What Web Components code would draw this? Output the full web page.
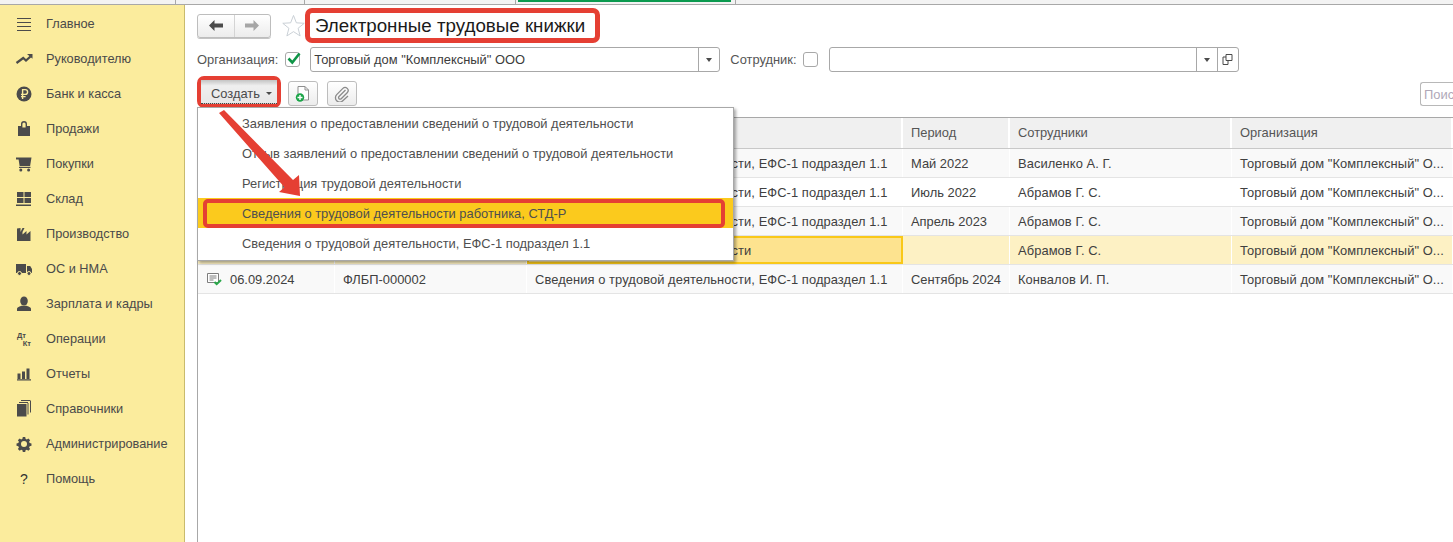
<!DOCTYPE html>
<html lang="ru">
<head>
<meta charset="utf-8">
<title>Электронные трудовые книжки</title>
<style>
  html, body { margin: 0; height: 100%; }
  body { font: 12.9px "Liberation Sans", Arial, sans-serif; color: #4b4b4b; background: #fff; overflow: hidden; }
</style>
</head>
<body>
<app-shell>
  <side-panel slot="side">
    <side-item icon="menu">Главное</side-item>
    <side-item icon="trend">Руководителю</side-item>
    <side-item icon="ruble">Банк и касса</side-item>
    <side-item icon="bag">Продажи</side-item>
    <side-item icon="cart">Покупки</side-item>
    <side-item icon="store">Склад</side-item>
    <side-item icon="factory">Производство</side-item>
    <side-item icon="truck">ОС и НМА</side-item>
    <side-item icon="person">Зарплата и кадры</side-item>
    <side-item icon="dtkt">Операции</side-item>
    <side-item icon="bars">Отчеты</side-item>
    <side-item icon="books">Справочники</side-item>
    <side-item icon="gear">Администрирование</side-item>
    <side-item icon="help">Помощь</side-item>
  </side-panel>
  <doc-header>Электронные трудовые книжки</doc-header>
  <filter-row></filter-row>
  <command-bar></command-bar>
  <doc-table></doc-table>
  <create-menu></create-menu>
</app-shell>

<script>
// sidebar icons, drawn on a 20x20 box
const ICONS = {
  menu: `<path d="M3 4.500h14M3 8.500h14M3 12.500h14M3 16.500h14" stroke="#4b4b4b" stroke-width="1" fill="none"/>`,
  trend: `<path d="M2.500 14 9.200 9l2.800 2.500 4.500-4" stroke="#4b4b4b" stroke-width="2.200" fill="none"/><path d="M13 5h5.500v4.800z" fill="#4b4b4b"/>`,
  ruble: `<circle cx="10" cy="10" r="7.500" fill="#4b4b4b"/><path d="M8.600 15V5.600h2.600a2.300 2.300 0 0 1 0 4.800H7M7 12.600h4.600" stroke="#fbec9d" stroke-width="1.400" fill="none"/>`,
  bag: `<path d="M4 7h3V5a3 3 0 0 1 6 0v2h3v10H4z" fill="#4b4b4b"/><path d="M8.400 8.500V5a1.600 1.600 0 0 1 3.200 0v3.500z" fill="#fbec9d"/>`,
  cart: `<path d="M2 3.500h15.500l-1.400 8.500H5.600L4.600 5.500H2z" fill="#4b4b4b"/><rect x="5" y="12.800" width="11.500" height="1.200" fill="#4b4b4b"/><circle cx="6.800" cy="16" r="1.500" fill="#4b4b4b"/><circle cx="14.600" cy="16" r="1.500" fill="#4b4b4b"/>`,
  store: `<path d="M3 3h6.500v5H3zM10.500 3H17v5h-6.500zM3 9h6.500v5H3zM10.500 9H17v5h-6.500zM2 15.500h15v1.500H2z" fill="#4b4b4b"/>`,
  factory: `<path d="M3 17V4.500l3.500-.5v4l2-4h2l-2 4v2.500l4-3.500v3.500l4-3.500V17z" fill="#4b4b4b"/>`,
  truck: `<path d="M2 5h10v9H2zM13 7h3.200L18 10v4h-5z" fill="#4b4b4b"/><circle cx="5.500" cy="14.500" r="2" fill="#4b4b4b" stroke="#fbec9d"/><circle cx="15" cy="14.500" r="2" fill="#4b4b4b" stroke="#fbec9d"/>`,
  person: `<ellipse cx="10" cy="7" rx="3.800" ry="4.600" fill="#4b4b4b"/><path d="M3 17v-2c0-1.600 3-2.800 4.600-3.200h4.800c1.600.4 4.600 1.600 4.600 3.200v2z" fill="#4b4b4b"/>`,
  bars: `<path d="M3.500 9.500h3v5.500h-3zM8 7.500h3V15H8zM12.500 4.500h3V15h-3zM3 15.200h14v1.200H3z" fill="#4b4b4b"/>`,
  books: `<path d="M3 5h9.500v12.500H3z" fill="#4b4b4b"/><path d="M14 4v11.500M16.500 2v11.500M5 3.500h9M7 1.500h9.500" stroke="#4b4b4b" fill="none"/>`,
  gear: `<path d="M8.600 2.500h2.800l.4 2.100 1.500.7 1.800-1.100 2 2-1.200 1.800.7 1.500 2.100.4v2.800l-2.100.4-.7 1.500 1.200 1.800-2 2-1.800-1.200-1.500.7-.4 2.100H8.600l-.4-2.100-1.500-.7-1.800 1.200-2-2 1.200-1.800-.7-1.500-2.100-.4V9.900l2.100-.4.7-1.500L2.900 6.200l2-2 1.800 1.100 1.500-.7z" transform="translate(1.400 .900) scale(.86)" fill="#4b4b4b"/><circle cx="10" cy="10" r="3" fill="#fbec9d"/>`
};

class AppShell extends HTMLElement {
  constructor() {
    super();
    this.attachShadow({ mode: "open" });
    this.shadowRoot.innerHTML = `
      <style>
        :host { display: block; position: relative; height: 542px; overflow: hidden; }
        .tabs { display: flex; height: 4px; background: #f3f3f3; border-bottom: 1px solid #a8a8a8; }
        .tabs i { display: block; box-sizing: border-box; height: 4px; border-right: 1px solid #a8a8a8; }
        .tabs .a { width: 176px; }
        .tabs .b { width: 129px; }
        .tabs .c { width: 211px; }
        .tabs .d { width: 220px; position: relative; }
        .tabs .d::before { content: ""; position: absolute; left: 2px; width: 213px; top: 0; height: 2px; background: #0b9a4f; }
        .body { display: flex; height: 537px; }
        main { flex: 1; min-width: 0; padding-left: 12px; display: flex; flex-direction: column; }
      </style>
      <div class="tabs"><i class="a"></i><i class="b"></i><i class="c"></i><i class="d"></i></div>
      <div class="body">
        <slot name="side"></slot>
        <main><slot></slot></main>
      </div>
    `;
  }
}

class SidePanel extends HTMLElement {
  constructor() {
    super();
    this.attachShadow({ mode: "open" });
    this.shadowRoot.innerHTML = `
      <style>
        :host { display: block; box-sizing: border-box; width: 185px; flex: none; padding-top: 1px; background: #fbec9d; border-right: 1px solid #c9bb6d; }
      </style>
      <slot></slot>
    `;
  }
}

class SideItem extends HTMLElement {
  constructor() {
    super();
    this.attachShadow({ mode: "open" });
  }

  connectedCallback() {
    const name = this.getAttribute("icon");
    let icon = `<svg width="20" height="20" viewBox="0 0 20 20">${ICONS[name] || ""}</svg>`;
    if (name === "dtkt") icon = `<span class="dk"><b>Дт</b><b>Кт</b></span>`;
    if (name === "help") icon = `<span class="q">?</span>`;
    this.shadowRoot.innerHTML = `
      <style>
        :host { display: flex; align-items: center; height: 35px; color: #4a4a4a; font-size: 12.75px; }
        .i { width: 20px; height: 20px; margin: 0 12px 0 14px; flex: none; display: flex; justify-content: center; align-items: center; }
        .q { font-size: 14px; color: #333; }
        .dk { display: flex; flex-direction: column; width: 14px; font-size: 7.500px; line-height: 8px; margin-top: 2px; }
        .dk b:last-child { align-self: flex-end; }
      </style>
      <span class="i">${icon}</span><slot></slot>
    `;
  }
}

class DocHeader extends HTMLElement {
  constructor() {
    super();
    this.attachShadow({ mode: "open" });
    this.shadowRoot.innerHTML = `
      <style>
        :host { display: flex; align-items: center; height: 35px; margin-top: 3px; flex: none; }
        .nav { display: flex; box-sizing: border-box; width: 74px; height: 24px; border: 1px solid #bdbdbd; border-radius: 3px; background: linear-gradient(#fff, #ececec); box-shadow: 0 1px 0 #c4c4c4; }
        .nav span { flex: 1; display: flex; align-items: center; justify-content: center; }
        .nav span + span { border-left: 1px solid #d4d4d4; }
        .star { margin-left: 11px; flex: none; }
        h1 { margin: 0; box-sizing: border-box; height: 35px; padding: 0 10px 0 5px; display: flex; align-items: center; font: 18.750px "Liberation Sans", Arial, sans-serif; color: #1a1a1a; border: 5px solid #e53f33; border-radius: 7px; white-space: nowrap; }
      </style>
      <div class="nav">
        <span><svg width="14" height="11" viewBox="0 0 14 11"><path d="M0 5.500 5.500 0v3.500H14v4H5.500V11z" fill="#4b4b4b"/></svg></span>
        <span><svg width="14" height="11" viewBox="0 0 14 11"><path d="M14 5.500 8.500 0v3.500H0v4h8.500V11z" fill="#a6a6a6"/></svg></span>
      </div>
      <svg class="star" width="23" height="23" viewBox="0 0 24 24"><path d="M12 1.500l3 7.700 8.200.5-6.400 5.200 2.100 8L12 18.400l-6.900 4.500 2.100-8L.8 9.700 9 9.200z" fill="#fff" stroke="#c8ced4"/></svg>
      <h1><slot></slot></h1>
    `;
  }
}

class FilterRow extends HTMLElement {
  constructor() {
    super();
    this.attachShadow({ mode: "open" });
    this.shadowRoot.innerHTML = `
      <style>
        :host { display: flex; align-items: center; height: 25px; margin-top: 4px; color: #555; flex: none; }
        .check { box-sizing: border-box; width: 15px; height: 15px; border: 1px solid #a8a8a8; border-radius: 3px; position: relative; flex: none; }
        .check svg { position: absolute; left: 0; top: -2px; }
        .c1 { margin: 0 10px 0 7px; }
        .c2 { margin: 0 11px 0 6px; }
        .field { box-sizing: border-box; height: 25px; border: 1px solid #a8a8a8; border-radius: 3px; display: flex; align-items: center; color: #3c3c3c; background: #fff; flex: none; }
        .text { flex: 1; padding-left: 3px; white-space: nowrap; }
        .btn { box-sizing: border-box; width: 21px; height: 23px; border-left: 1px solid #a8a8a8; display: flex; align-items: center; justify-content: center; }
        .arrow { width: 0; height: 0; border: 3px solid transparent; border-top: 4px solid #4b4b4b; border-bottom: 0; }
        .org { width: 410px; }
        .emp { width: 410px; }
        .emp-label { margin-left: 10px; }
      </style>
      <span>Организация:</span>
      <span class="check c1"><svg width="16" height="16" viewBox="0 0 16 16"><path d="M2.500 7.500l3.800 4L13.500 2.500" fill="none" stroke="#0f9547" stroke-width="2.600"/></svg></span>
      <div class="field org"><span class="text">Торговый дом "Комплексный" ООО</span><span class="btn"><i class="arrow"></i></span></div>
      <span class="emp-label">Сотрудник:</span>
      <span class="check c2"></span>
      <div class="field emp">
        <span class="text"></span>
        <span class="btn"><i class="arrow"></i></span>
        <span class="btn"><svg width="11" height="11" viewBox="0 0 11 11"><path d="M4 .5h6v6H4zM4 3H1v7.500h5V7" fill="none" stroke="#4b4b4b"/></svg></span>
      </div>
    `;
  }
}

class CommandBar extends HTMLElement {
  constructor() {
    super();
    this.attachShadow({ mode: "open" });
    this.shadowRoot.innerHTML = `
      <style>
        :host { display: flex; align-items: center; height: 32px; margin-top: 4px; flex: none; }
        .create { box-sizing: border-box; width: 84px; height: 32px; border: 4px solid #e53f33; border-radius: 7px; margin-right: 7px; flex: none; }
        .inner { box-sizing: border-box; height: 100%; padding: 3px 0 0 10px; border-bottom: 1px dotted #444; background: linear-gradient(#c4c4c4, #efefef 25%, #e8e8e8); display: flex; align-items: center; gap: 6px; color: #4a4a4a; }
        .arrow { width: 0; height: 0; border: 3px solid transparent; border-top: 3px solid #4b4b4b; border-bottom: 0; }
        .ico { box-sizing: border-box; width: 30px; height: 25px; margin: 3px 9px 0 0; border: 1px solid #bdbdbd; border-radius: 3px; background: linear-gradient(#fff, #ececec); display: flex; align-items: center; justify-content: center; flex: none; }
        .search { box-sizing: border-box; width: 33px; height: 24px; margin: 4px 0 0 auto; border: 1px solid #b8b8b8; border-right: 0; border-radius: 3px 0 0 3px; padding-left: 3px; display: flex; align-items: center; color: #b0a8b8; overflow: hidden; }
      </style>
      <div class="create"><div class="inner"><span>Создать</span><i class="arrow"></i></div></div>
      <div class="ico"><svg width="18" height="18" viewBox="0 0 18 18"><path d="M4 1.500h7l3.500 3.500v10H4z" fill="#fff" stroke="#8f8f8f"/><path d="M11 1.500V5h3.500" fill="none" stroke="#8f8f8f"/><circle cx="6" cy="12.500" r="4.200" fill="#1ba548"/><path d="M6 10v5M3.500 12.500h5" stroke="#fff" stroke-width="1.400"/></svg></div>
      <div class="ico"><svg width="16" height="16" viewBox="0 0 16 16"><path d="M11.500 4 5 10.500a1.500 1.500 0 0 0 2.200 2.200l6-6a3 3 0 0 0-4.300-4.300l-6.200 6.200a4.300 4.300 0 0 0 6.100 6.100L14 10" fill="none" stroke="#8a8a8a" stroke-width="1.300"/></svg></div>
      <div class="search">Поис</div>
    `;
  }
}

const ROWS = [
  ["", "", "Сведения о трудовой деятельности, ЕФС-1 подраздел 1.1", "Май 2022", "Василенко А. Г."],
  ["", "", "Сведения о трудовой деятельности, ЕФС-1 подраздел 1.1", "Июль 2022", "Абрамов Г. С."],
  ["", "", "Сведения о трудовой деятельности, ЕФС-1 подраздел 1.1", "Апрель 2023", "Абрамов Г. С."],
  ["", "", "Сведения о трудовой деятельности", "", "Абрамов Г. С."],
  ["06.09.2024", "ФЛБП-000002", "Сведения о трудовой деятельности, ЕФС-1 подраздел 1.1", "Сентябрь 2024", "Конвалов И. П."]
];

class DocTable extends HTMLElement {
  constructor() {
    super();
    this.attachShadow({ mode: "open" });
    const rows = ROWS.map((r, i) => `
      <div class="row ${i === 3 ? "sel" : ""}">
        <span class="c date">${i === 4 ? `<svg width="16" height="14" viewBox="0 0 16 14"><path d="M1.500 1.500h11v9h-11z" fill="#fff" stroke="#7d7d7d"/><path d="M3.500 4h7M3.500 6h7M3.500 8h4" stroke="#7d7d7d"/><path d="M8.500 10l2.200 2.200L15 8" fill="none" stroke="#2aa84a" stroke-width="2"/></svg>` : ""}<span>${r[0]}</span></span>
        <span class="c">${r[1]}</span>
        <span class="c cur wide">${r[2]}</span>
        <span class="c">${r[3]}</span>
        <span class="c wide">${r[4]}</span>
        <span class="c wide">Торговый дом "Комплексный" О...</span>
      </div>`).join("");
    this.shadowRoot.innerHTML = `
      <style>
        :host { display: block; box-sizing: border-box; flex: 1; margin-top: 9px; border-top: 1px solid #a8a8a8; border-left: 1px solid #a8a8a8; color: #404040; }
        .row, .head { display: grid; grid-template-columns: 137px 192px 376px 107px 222px 221px; }
        .head { box-sizing: border-box; height: 31px; background: #f0f0f0; border-bottom: 1px solid #c8c8c8; color: #555; }
        .head span { display: flex; align-items: center; padding: 0 0 2px 8px; border-right: 2px solid #fff; }
        .row { box-sizing: border-box; height: 29px; border-bottom: 1px solid #e4e4e4; background: #fff; }
        .row:nth-of-type(even) { background: #f9f9f9; }
        .row.sel { background: #fdf1c4; }
        .c { display: flex; align-items: center; padding-left: 8px; white-space: nowrap; overflow: hidden; border-right: 1px solid #fff; min-width: 0; }
        .wide { letter-spacing: .08px; }
        .date { gap: 8px; }
        .sel .cur { box-sizing: border-box; background: #fde38f; border: 2px solid #f9c818; padding-left: 6px; }
      </style>
      <div class="head"><span></span><span></span><span></span><span>Период</span><span>Сотрудники</span><span>Организация</span></div>
      ${rows}
    `;
  }
}

class CreateMenu extends HTMLElement {
  constructor() {
    super();
    this.attachShadow({ mode: "open" });
    const items = [
      "Заявления о предоставлении сведений о трудовой деятельности",
      "Отзыв заявлений о предоставлении сведений о трудовой деятельности",
      "Регистрация трудовой деятельности",
      "Сведения о трудовой деятельности работника, СТД-Р",
      "Сведения о трудовой деятельности, ЕФС-1 подраздел 1.1"
    ];
    this.shadowRoot.innerHTML = `
      <style>
        :host { display: block; position: absolute; left: 197px; top: 107px; box-sizing: border-box; width: 537px; height: 154px; background: #fff; border: 1px solid #a8a8a8; box-shadow: 2px 2px 3px rgba(0,0,0,.35); color: #4f4f4f; }
        div { height: 30px; display: flex; align-items: center; padding-left: 44px; white-space: nowrap; }
        .hi { background: #fbca1d; position: relative; }
        .hi::after { content: ""; position: absolute; left: 5px; right: 8px; top: 1px; bottom: 0; border: 4px solid #e53f33; border-radius: 5px; }
        svg { position: absolute; left: 0; top: 0; overflow: visible; }
      </style>
      ${items.map((t, i) => `<div class="${i === 3 ? "hi" : ""}">${t}</div>`).join("")}
      <svg width="110" height="95" viewBox="0 0 110 95"><path d="M21 5 26 2 95 72 101 67 102 88 81 84 86.500 79.300z" fill="#e53f33"/></svg>
    `;
  }
}

customElements.define("app-shell", AppShell);
customElements.define("side-panel", SidePanel);
customElements.define("side-item", SideItem);
customElements.define("doc-header", DocHeader);
customElements.define("filter-row", FilterRow);
customElements.define("command-bar", CommandBar);
customElements.define("doc-table", DocTable);
customElements.define("create-menu", CreateMenu);
</script>
</body>
</html>
